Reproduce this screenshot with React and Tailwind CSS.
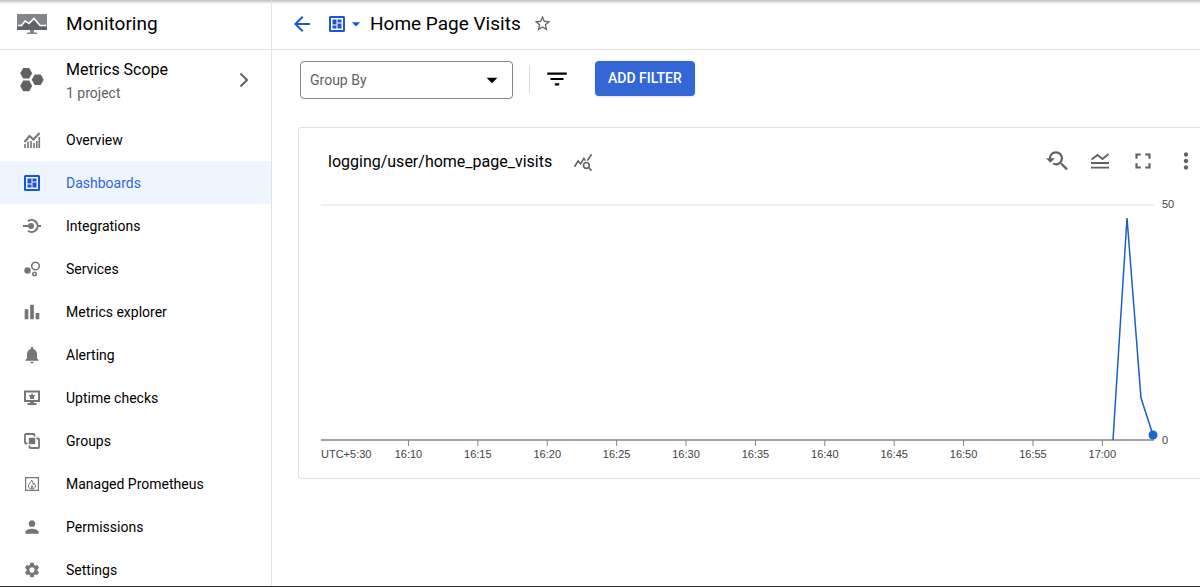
import React, { useState } from 'react';
import {
  MdArrowBack,
  MdArrowDropDown,
  MdBarChart,
  MdFilterList,
  MdFullscreen,
  MdMoreVert,
  MdNotifications,
  MdPerson,
  MdQueryStats,
  MdSettings,
  MdStarBorder,
  MdYoutubeSearchedFor,
} from 'react-icons/md';

const TICKS = ['16:10', '16:15', '16:20', '16:25', '16:30', '16:35', '16:40', '16:45', '16:50', '16:55', '17:00'];

// Visits series in plot units (833 wide, 236 high)
const SERIES = [[792, 236], [806, 14], [820, 194], [832, 231]];

function LogoIcon() {
  return (
    <svg width="30" height="22" viewBox="0 0 30 22">
      <path d="M0 1h30v16H0z" fill="#80868b" />
      <path d="M0 13h4.500L8 8.500l4 2.500 5-5 6 7h7v4H0z" fill="#5f6368" />
      <path d="M1 12.500h3.500L8 8l4 2.500 5-5 6 7h6.500" fill="none" stroke="#fff" strokeWidth="1.600" />
      <path d="M13 17h4v2.500h3V21H10v-1.500h3z" fill="#80868b" />
    </svg>
  );
}

function ScopeIcon() {
  return (
    <svg width="24" height="26" viewBox="0 0 24 26" fill="#616161">
      <path d="M3.200 1h6l3 5.300-3 5.300h-6l-3-5.300z" />
      <path d="M3.200 13.600h6l3 5.300-3 5.300h-6l-3-5.300z" />
      <path d="M14.700 7.500h6l3 5.300-3 5.300h-6l-3-5.300z" />
    </svg>
  );
}

function OverviewIcon() {
  return (
    <svg width="18" height="18" viewBox="0 0 18 18" fill="none" stroke="currentColor">
      <path d="M1.500 11l5-6 4 3.500 6-6.500" strokeWidth="2" />
      <path d="M2 13v4M5 10.500V17M8 10v7M11 12v5M13.800 10v7M16.300 6v11" strokeWidth="1.600" />
    </svg>
  );
}

function DashboardIcon() {
  return (
    <svg width="16" height="16" viewBox="0 0 16 16">
      <rect x="1" y="1" width="14" height="14" rx=".5" fill="none" stroke="currentColor" strokeWidth="2" />
      <path d="M3.500 3.500h4v5h-4zM3.500 9.500h4v3h-4zM8.500 3.500h4v3h-4zM8.500 7.500h4v5h-4z" fill="currentColor" />
    </svg>
  );
}

function IntegrationsIcon() {
  return (
    <svg width="18" height="16" viewBox="0 0 18 16" fill="none" stroke="currentColor">
      <path d="M0 8h8M14 8h4" strokeWidth="2" />
      <path d="M5 3.200A6 6 0 1 1 5 12.800" strokeWidth="2" />
      <circle cx="8" cy="8" r="3" fill="currentColor" stroke="none" />
    </svg>
  );
}

function ServicesIcon() {
  return (
    <svg width="18" height="18" viewBox="0 0 18 18" fill="none" stroke="currentColor" strokeWidth="1.600">
      <circle cx="4.500" cy="10.500" r="3.200" fill="currentColor" stroke="none" />
      <circle cx="12.500" cy="6" r="3.800" />
      <circle cx="11.500" cy="14" r="1.700" />
    </svg>
  );
}

function UptimeIcon() {
  return (
    <svg width="16" height="16" viewBox="0 0 16 16">
      <path d="M1 1.500h14v9.500H1z" fill="none" stroke="currentColor" strokeWidth="2" />
      <path d="M6 11.500h4V13h2.500v2h-9v-2H6zM8 3.200l1.200 1.800 2.300.3-1.600 1.600.3 2H5.800l.3-2-1.600-1.600 2.300-.3z" fill="currentColor" />
    </svg>
  );
}

function GroupsIcon() {
  return (
    <svg width="16" height="16" viewBox="0 0 16 16" fill="none" stroke="currentColor" strokeWidth="1.800">
      <path d="M3.500 10.500H2q-1 0-1-1V2q0-1 1-1h7.500q1 0 1 1v1.500" />
      <path d="M12.500 5.500H14q1 0 1 1V14q0 1-1 1H6.500q-1 0-1-1v-1.500" />
      <path d="M4.800 4.800h6.400v6.400H4.800z" fill="currentColor" stroke="none" />
    </svg>
  );
}

function PrometheusIcon() {
  return (
    <svg width="14" height="14" viewBox="0 0 14 14" fill="none" stroke="currentColor">
      <path d="M.6.600h12.800v12.800H.6z" strokeWidth="1.200" />
      <path d="M6.500 3c.2 2-3 3.300-3 6 0 2 1.500 3 3.500 3s3.500-1.200 3.500-3c0-1.400-.9-2-1.300-3-.4.900-.7 1.200-1.200 1.400C8 6 7.800 4.200 6.500 3zM7 8.500L5.800 12M7 8.500L8.300 12" />
    </svg>
  );
}

function LegendIcon() {
  return (
    <svg width="18" height="16" viewBox="0 0 18 16" fill="none" stroke="currentColor" strokeWidth="1.800">
      <path d="M.5 6.500l6-4.500 5 4L17.500 1" />
      <path d="M0 10h18M0 14.600h18" />
    </svg>
  );
}

function ChevronIcon() {
  return (
    <svg width="10" height="16" viewBox="0 0 10 16" fill="none" stroke="#5f6368" strokeWidth="2">
      <path d="M1.500 1.500L8 8l-6.500 6.500" />
    </svg>
  );
}

const NAV = [
  { label: 'Overview', icon: <OverviewIcon /> },
  { label: 'Dashboards', icon: <DashboardIcon /> },
  { label: 'Integrations', icon: <IntegrationsIcon /> },
  { label: 'Services', icon: <ServicesIcon /> },
  { label: 'Metrics explorer', icon: <MdBarChart size={22} /> },
  { label: 'Alerting', icon: <MdNotifications size={20} /> },
  { label: 'Uptime checks', icon: <UptimeIcon /> },
  { label: 'Groups', icon: <GroupsIcon /> },
  { label: 'Managed Prometheus', icon: <PrometheusIcon /> },
  { label: 'Permissions', icon: <MdPerson size={20} /> },
  { label: 'Settings', icon: <MdSettings size={18} /> },
];

function Sidebar({ active, onSelect }) {
  return (
    <aside className="flex w-[272px] shrink-0 flex-col border-r border-[#e0e0e0]">
      <div className="flex h-[50px] shrink-0 items-center border-b border-[#e0e0e0] pb-0.5">
        <span className="flex w-16 shrink-0 justify-center">
          <LogoIcon />
        </span>
        <h2 className="pl-0.5 text-[19px] leading-6">Monitoring</h2>
      </div>

      <button type="button" className="flex h-[68px] shrink-0 items-center pr-[22px] pb-2 text-left">
        <span className="flex w-16 shrink-0 justify-center">
          <ScopeIcon />
        </span>
        <span className="flex flex-1 flex-col pt-0.5 pl-0.5">
          <span className="text-base leading-6">Metrics Scope</span>
          <span className="text-sm leading-[22px] text-[#616161]">1 project</span>
        </span>
        <ChevronIcon />
      </button>

      <nav>
        {NAV.map(({ label, icon }) => (
          <a
            key={label}
            href="#"
            onClick={() => onSelect(label)}
            className={`flex h-[43px] items-center ${active === label ? 'bg-[#eef5fe] text-[#3367d6]' : ''}`}
          >
            <span className={`flex w-16 shrink-0 justify-center ${active === label ? 'text-[#1a56d6]' : 'text-[#757575]'}`}>
              {icon}
            </span>
            <span className="pl-0.5 text-sm">{label}</span>
          </a>
        ))}
      </nav>
    </aside>
  );
}

function VisitsChart() {
  const [lastX, lastY] = SERIES[SERIES.length - 1];
  return (
    <div className="flex pr-1 pl-[22px] font-['Liberation_Sans',Arial,sans-serif] text-[11px] leading-4 text-[#424242]">
      <div className="min-w-0 flex-1 pt-2">
        <svg className="block h-[258px] w-full overflow-visible" role="img" aria-label="Home page visits over time">
          <line x1="0" x2="100%" y1="1" y2="1" stroke="#f0f0f0" strokeWidth="2" />
          <line x1="0" x2="100%" y1="236" y2="236" stroke="#80868b" strokeWidth="1.5" />
          <text x="0" y="254" fill="#424242">UTC+5:30</text>
          {TICKS.map((t, i) => {
            const x = `${10.5 + i * 8.33}%`;
            return (
              <g key={t}>
                <line x1={x} x2={x} y1="236" y2="242" stroke="#80868b" />
                <text x={x} y="254" textAnchor="middle" fill="#424242">{t}</text>
              </g>
            );
          })}
          <svg width="100%" height="236" viewBox="0 0 833 236" preserveAspectRatio="none">
            <polyline
              points={SERIES.map((p) => p.join(',')).join(' ')}
              fill="none"
              stroke="#1a5fc8"
              strokeWidth="1.5"
              vectorEffect="non-scaling-stroke"
            />
          </svg>
          <circle cx={`${(lastX / 833) * 100}%`} cy={lastY} r="4.5" fill="#1967d2" />
        </svg>
      </div>
      <div className="flex h-[252px] w-[42px] flex-col justify-between pl-2">
        <span>50</span>
        <span>0</span>
      </div>
    </div>
  );
}

export default function App() {
  const [active, setActive] = useState('Dashboards');
  const [groupBy, setGroupBy] = useState('');

  return (
    <div className="flex h-screen overflow-hidden border-b border-[#303134] bg-white font-[Roboto,sans-serif] text-black shadow-[inset_0_5px_3px_-3px_#bdbdbd]">
      <Sidebar active={active} onSelect={setActive} />

      <main className="min-w-0 flex-1">
        <header className="flex h-[50px] items-center border-b border-[#e0e0e0] pb-0.5 pl-[18px]">
          <button type="button" aria-label="Back" className="text-[#1a56d6]">
            <MdArrowBack size={24} />
          </button>
          <button type="button" aria-label="Switch dashboard" className="ml-[15px] flex items-center text-[#1a56d6]">
            <DashboardIcon />
            <MdArrowDropDown size={20} className="ml-px" />
          </button>
          <h1 className="ml-1 text-[19px] leading-6">Home Page Visits</h1>
          <button type="button" aria-label="Add to favorites" className="ml-3 text-[#5f6368]">
            <MdStarBorder size={19} />
          </button>
        </header>

        <div className="flex items-start pt-[11px] pl-7">
          <div className="relative">
            <select
              aria-label="Group By"
              value={groupBy}
              onChange={(e) => setGroupBy(e.target.value)}
              className="block h-[38px] w-[213px] appearance-none rounded border border-[#80868b] bg-white pl-[9px] text-sm text-[#616161]"
            >
              <option value="">Group By</option>
              <option value="project_id">project_id</option>
            </select>
            <MdArrowDropDown size={26} className="pointer-events-none absolute top-1.5 right-2" />
          </div>
          <div className="mt-1 ml-4 h-7 w-px bg-[#dadce0]" />
          <button type="button" aria-label="Filters" className="mt-[5px] ml-3.5">
            <MdFilterList size={26} />
          </button>
          <button
            type="button"
            className="ml-[25px] h-[35px] rounded bg-[#3367d6] px-[13px] pb-0.5 text-sm font-medium text-white shadow"
          >
            ADD FILTER
          </button>
        </div>

        <section className="mt-7 ml-[26px] rounded-l border border-r-0 border-[#e0e0e0] pb-4">
          <div className="flex h-[68px] items-center pl-[29px]">
            <h3 className="text-base leading-6">logging/user/home_page_visits</h3>
            <button type="button" aria-label="Explore data" className="ml-[21px] text-[#616161]">
              <MdQueryStats size={20} />
            </button>
            <div className="mr-px ml-auto flex items-center gap-[17px] pb-0.5 text-[#616161]">
              <button type="button" aria-label="Reset zoom" className="flex w-[26px] justify-center">
                <MdYoutubeSearchedFor size={26} />
              </button>
              <button type="button" aria-label="Toggle legend" className="flex w-[26px] justify-center">
                <LegendIcon />
              </button>
              <button type="button" aria-label="Full screen" className="flex w-[26px] justify-center">
                <MdFullscreen size={26} />
              </button>
              <button type="button" aria-label="More options" className="flex w-[26px] justify-center">
                <MdMoreVert size={26} />
              </button>
            </div>
          </div>
          <VisitsChart />
        </section>
      </main>
    </div>
  );
}
